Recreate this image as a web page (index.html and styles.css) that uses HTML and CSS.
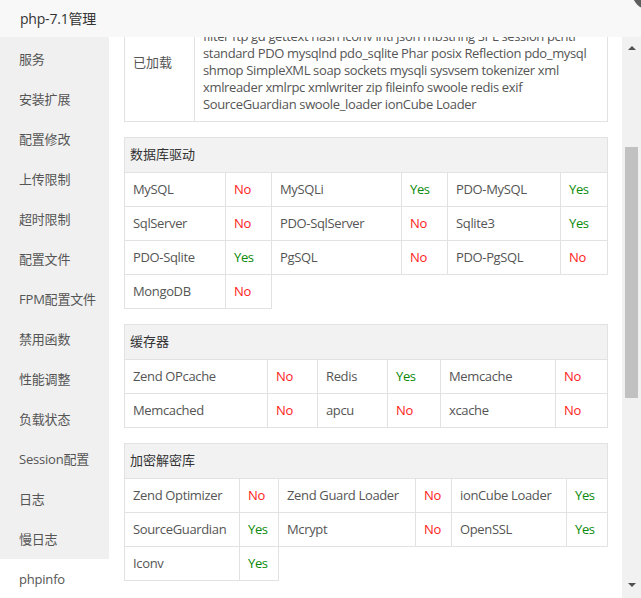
FILE: index.html
```html
<!DOCTYPE html>
<html lang="zh-CN">
<head>
<meta charset="utf-8">
<title>php-7.1管理</title>
<link rel="stylesheet" href="styles.css">
</head>
<body>
<div class="window">
  <header class="titlebar">php-7.1管理</header>
  <div class="body">
    <nav class="sidebar">
      <div class="item">服务</div>
      <div class="item">安装扩展</div>
      <div class="item">配置修改</div>
      <div class="item">上传限制</div>
      <div class="item">超时限制</div>
      <div class="item">配置文件</div>
      <div class="item">FPM配置文件</div>
      <div class="item">禁用函数</div>
      <div class="item">性能调整</div>
      <div class="item">负载状态</div>
      <div class="item">Session配置</div>
      <div class="item">日志</div>
      <div class="item">慢日志</div>
      <div class="item active">phpinfo</div>
    </nav>
    <main class="content">
      <div class="inner">
        <table class="tbl t-ext">
          <colgroup><col><col></colgroup>
          <tbody>
            <tr>
              <td class="label">已加载</td>
              <td class="ext">Core date libxml openssl pcre sqlite3 zlib bcmath calendar ctype curl dom<br>filter ftp gd gettext hash iconv intl json mbstring SPL session pcntl<br>standard PDO mysqlnd pdo_sqlite Phar posix Reflection pdo_mysql<br>shmop SimpleXML soap sockets mysqli sysvsem tokenizer xml<br>xmlreader xmlrpc xmlwriter zip fileinfo swoole redis exif<br>SourceGuardian swoole_loader ionCube Loader</td>
            </tr>
          </tbody>
        </table>

        <table class="tbl t-db">
          <colgroup><col><col><col><col><col><col></colgroup>
          <thead><tr><th colspan="6">数据库驱动</th></tr></thead>
          <tbody>
            <tr><td>MySQL</td><td class="no">No</td><td>MySQLi</td><td class="yes">Yes</td><td>PDO-MySQL</td><td class="yes">Yes</td></tr>
            <tr><td>SqlServer</td><td class="no">No</td><td>PDO-SqlServer</td><td class="no">No</td><td>Sqlite3</td><td class="yes">Yes</td></tr>
            <tr><td>PDO-Sqlite</td><td class="yes">Yes</td><td>PgSQL</td><td class="no">No</td><td>PDO-PgSQL</td><td class="no">No</td></tr>
            <tr><td>MongoDB</td><td class="no">No</td></tr>
          </tbody>
        </table>

        <table class="tbl t-cache">
          <colgroup><col><col><col><col><col><col></colgroup>
          <thead><tr><th colspan="6">缓存器</th></tr></thead>
          <tbody>
            <tr><td>Zend OPcache</td><td class="no">No</td><td>Redis</td><td class="yes">Yes</td><td>Memcache</td><td class="no">No</td></tr>
            <tr><td>Memcached</td><td class="no">No</td><td>apcu</td><td class="no">No</td><td>xcache</td><td class="no">No</td></tr>
          </tbody>
        </table>

        <table class="tbl t-crypt">
          <colgroup><col><col><col><col><col><col></colgroup>
          <thead><tr><th colspan="6">加密解密库</th></tr></thead>
          <tbody>
            <tr><td>Zend Optimizer</td><td class="no">No</td><td>Zend Guard Loader</td><td class="no">No</td><td>ionCube Loader</td><td class="yes">Yes</td></tr>
            <tr><td>SourceGuardian</td><td class="yes">Yes</td><td>Mcrypt</td><td class="no">No</td><td>OpenSSL</td><td class="yes">Yes</td></tr>
            <tr><td>Iconv</td><td class="yes">Yes</td></tr>
          </tbody>
        </table>
      </div>
    </main>
    <div class="scrollbar">
      <span class="arrow up"></span>
      <span class="thumb"></span>
      <span class="arrow down"></span>
    </div>
  </div>
  <span class="close"></span>
</div>
</body>
</html>
```

FILE: styles.css
```css
* { box-sizing: border-box; }

html, body {
  margin: 0;
  padding: 0;
  background: #fff;
}

body {
  width: 641px;
  height: 598px;
  overflow: hidden;
  font-family: "Microsoft YaHei", "Open Sans", "Noto Sans CJK SC", sans-serif;
  font-size: 13px;
  color: #555;
}

.window {
  position: relative;
  width: 641px;
  height: 598px;
  display: flex;
  flex-direction: column;
  overflow: hidden;
}

.titlebar {
  height: 37px;
  flex: none;
  background: #f8f8f8;
  padding-left: 20px;
  line-height: 37px;
  font-size: 14px;
  color: #333;
  letter-spacing: -0.2px;
}

.body {
  flex: 1;
  display: flex;
  min-height: 0;
}

.sidebar {
  width: 109px;
  flex: none;
  background: #f0f0f0;
  padding-top: 2px;
}

.item {
  height: 40px;
  line-height: 40px;
  padding-left: 19px;
  color: #555;
  white-space: nowrap;
  letter-spacing: -0.2px;
}

.item.active {
  background: #fff;
}

.content {
  flex: 1;
  min-width: 0;
  overflow: hidden;
  padding: 0 15px;
  background: #fff;
}

.inner {
  margin-top: -35px;
}

.tbl {
  width: 483px;
  border-collapse: collapse;
  table-layout: fixed;
  margin-bottom: 15px;
}

.tbl th,
.tbl td {
  border: 1px solid #e2e2e2;
  padding: 8px 8px;
  line-height: 17px;
  text-align: left;
  font-weight: normal;
  white-space: nowrap;
  overflow: hidden;
  letter-spacing: -0.35px;
}

.tbl th {
  background: #f2f2f2;
  color: #333;
  padding: 8px 5px 9px;
  letter-spacing: 0;
}

.tbl td.label {
  padding-left: 8px;
  vertical-align: middle;
  letter-spacing: 0;
}

.tbl td.ext {
  padding: 8px 8px;
}

.yes { color: #0a8a0a; }
.no  { color: #ff1a1a; }

.t-ext col:nth-child(1) { width: 70px; }
.t-ext col:nth-child(2) { width: 413px; }

.t-db col:nth-child(1) { width: 101px; }
.t-db col:nth-child(2) { width: 46px; }
.t-db col:nth-child(3) { width: 130px; }
.t-db col:nth-child(4) { width: 46px; }
.t-db col:nth-child(5) { width: 113px; }
.t-db col:nth-child(6) { width: 47px; }

.t-cache col:nth-child(1) { width: 143px; }
.t-cache col:nth-child(2) { width: 50px; }
.t-cache col:nth-child(3) { width: 70px; }
.t-cache col:nth-child(4) { width: 53px; }
.t-cache col:nth-child(5) { width: 115px; }
.t-cache col:nth-child(6) { width: 52px; }

.t-crypt col:nth-child(1) { width: 115px; }
.t-crypt col:nth-child(2) { width: 39px; }
.t-crypt col:nth-child(3) { width: 137px; }
.t-crypt col:nth-child(4) { width: 36px; }
.t-crypt col:nth-child(5) { width: 115px; }
.t-crypt col:nth-child(6) { width: 41px; }

.scrollbar {
  width: 19px;
  flex: none;
  background: #f1f1f1;
  display: flex;
  flex-direction: column;
  align-items: center;
}

.arrow {
  width: 0;
  height: 0;
  border-left: 4px solid transparent;
  border-right: 4px solid transparent;
  flex: none;
}

.arrow.up {
  border-bottom: 4px solid #505050;
  margin-top: 9px;
}

.arrow.down {
  border-top: 4px solid #505050;
  margin-top: auto;
  margin-bottom: 11px;
}

.thumb {
  width: 13px;
  height: 251px;
  background: #c1c1c1;
  margin-top: 97px;
  margin-left: -1px;
  flex: none;
}

.close {
  position: absolute;
  left: 632px;
  top: -26px;
  width: 36px;
  height: 36px;
  border-radius: 50%;
  background: #5f5f5f;
}
```
